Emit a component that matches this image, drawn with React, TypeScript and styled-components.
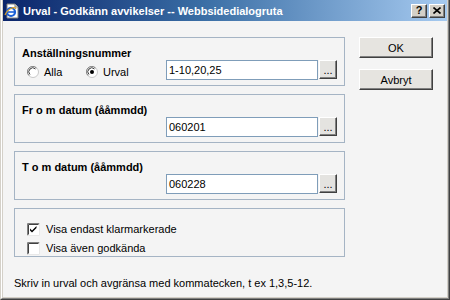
import React from "react";
import styled, { createGlobalStyle } from "styled-components";

const GlobalStyle = createGlobalStyle`
  html, body {
    margin: 0;
    padding: 0;
  }
  body {
    width: 450px;
    height: 300px;
    overflow: hidden;
    background: #d4d0c8;
    font-family: "Liberation Sans", Arial, sans-serif;
    font-size: 11px;
    color: #000;
  }
`;

const Frame = styled.div`
  width: 450px;
  height: 300px;
  box-sizing: border-box;
  background: #d4d0c8;
  border-right: 1px solid #404040;
  border-bottom: 1px solid #404040;
  border-left: 1px solid #d4d0c8;
`;

const FrameInner = styled.div`
  height: 100%;
  box-sizing: border-box;
  border-right: 1px solid #808080;
  border-bottom: 1px solid #808080;
  border-left: 1px solid #ffffff;
  padding: 0 1px 1px 1px;
  display: flex;
  flex-direction: column;
`;

const TitleBar = styled.div`
  height: 21px;
  flex-shrink: 0;
  display: flex;
  align-items: center;
  padding: 0 2px 0 1px;
  background: linear-gradient(to right, #0a246a 0%, #3a6ea5 45%, #a6caf0 100%);
`;

const TitleText = styled.div`
  flex: 1;
  margin-left: 3px;
  color: #fff;
  font-weight: bold;
  white-space: nowrap;
`;

const TitleButton = styled.div`
  width: 16px;
  height: 14px;
  box-sizing: border-box;
  margin-left: 2px;
  background: #d4d0c8;
  border-top: 1px solid #fff;
  border-left: 1px solid #fff;
  border-right: 1px solid #404040;
  border-bottom: 1px solid #404040;
  box-shadow: inset -1px -1px 0 #808080;
  display: flex;
  align-items: center;
  justify-content: center;
  font-weight: bold;
  font-size: 11px;
  line-height: 1;
  padding-bottom: 1px;
`;

const Body = styled.div`
  flex: 1;
  display: flex;
  flex-direction: column;
  background: #f4f4f4;
  padding: 16px 0 0 11px;
`;

const Main = styled.div`
  display: flex;
  align-items: flex-start;
`;

const LeftCol = styled.div`
  width: 331px;
  display: flex;
  flex-direction: column;
  gap: 8px;
`;

const RightCol = styled.div`
  margin-left: 14px;
  display: flex;
  flex-direction: column;
  gap: 11px;
`;

const Box = styled.div`
  height: 49px;
  box-sizing: border-box;
  border: 1px solid #a5b4c4;
  padding: 9px 7px 0 7px;
  display: flex;
  flex-direction: column;
`;

const CheckBox = styled(Box)`
  padding: 13px 12px 0 12px;
  gap: 5px;
`;

const BoxTitle = styled.div`
  font-weight: bold;
  line-height: 13px;
  height: 13px;
`;

const Row = styled.div`
  display: flex;
  align-items: center;
  height: 20px;
`;

const Radios = styled.div`
  flex: 1;
  display: flex;
  align-items: center;
  padding: 3px 0 0 5px;
`;

const RadioLabel = styled.label<{ $width: number }>`
  width: ${({ $width }) => $width}px;
  display: flex;
  align-items: center;
  gap: 5px;
`;

const Spacer = styled.div`
  flex: 1;
`;

const TextInput = styled.div`
  width: 152px;
  height: 20px;
  box-sizing: border-box;
  border: 1px solid #7f9db9;
  background: #fff;
  padding: 0 2px;
  line-height: 18px;
`;

const DotsButton = styled.div`
  width: 18px;
  height: 19px;
  box-sizing: border-box;
  margin-left: 1px;
  align-self: flex-start;
  background: #e4e3e0;
  border-top: 1px solid #fff;
  border-left: 1px solid #fff;
  border-right: 1px solid #404040;
  border-bottom: 1px solid #404040;
  box-shadow: inset -1px -1px 0 #808080;
  display: flex;
  justify-content: center;
  align-items: flex-end;
  line-height: 12px;
  padding-bottom: 2px;
`;

const Button = styled.div`
  width: 74px;
  height: 21px;
  box-sizing: border-box;
  background: #e6e4e0;
  border-top: 1px solid #fff;
  border-left: 1px solid #fff;
  border-right: 1px solid #404040;
  border-bottom: 1px solid #404040;
  box-shadow: inset -1px -1px 0 #808080;
  display: flex;
  align-items: center;
  justify-content: center;
`;

const CheckRow = styled.label`
  display: flex;
  align-items: center;
  gap: 6px;
  height: 14px;
`;

const Footnote = styled.div`
  margin-top: auto;
  margin-bottom: 8px;
`;

function Radio({ checked }: { checked: boolean }) {
  return (
    <svg width="12" height="12" viewBox="0 0 12 12">
      <circle cx="6" cy="6" r="5.5" fill="#fff" stroke="#c8c8c8" />
      <path d="M2 9.5 A5 5 0 0 1 9.5 2" fill="none" stroke="#808080" />
      <path d="M3 8.5 A3.8 3.8 0 0 1 8.5 3" fill="none" stroke="#404040" />
      {checked && <circle cx="6" cy="6" r="2" fill="#000" />}
    </svg>
  );
}

function Check({ checked }: { checked: boolean }) {
  return (
    <svg width="13" height="13" viewBox="0 0 13 13">
      <rect x="0" y="0" width="13" height="13" fill="#fff" />
      <path d="M0.5 12.5 V0.5 H12.5" fill="none" stroke="#808080" />
      <path d="M1.5 11.5 V1.5 H11.5" fill="none" stroke="#404040" />
      <path d="M12.5 0.5 V12.5 H0.5" fill="none" stroke="#e8e8e8" />
      {checked && (
        <path d="M3 5.5 L5 7.5 L9.5 3 V5 L5 9.5 L3 7.5 Z" fill="#000" />
      )}
    </svg>
  );
}

function IeIcon() {
  return (
    <svg width="16" height="16" viewBox="0 0 16 16">
      <path d="M3 1 H11 L14 4 V15 H3 Z" fill="#fff" stroke="#808080" />
      <path d="M11 1 V4 H14" fill="#e0e0e0" stroke="#808080" />
      <circle cx="7" cy="9" r="4" fill="none" stroke="#1c5fd6" strokeWidth="2.2" />
      <path d="M3.5 9 H10.5" stroke="#1c5fd6" strokeWidth="1.6" />
      <path d="M1 12 C4 5 11 3 12 6" fill="none" stroke="#e0a020" strokeWidth="1.2" />
    </svg>
  );
}

function CloseGlyph() {
  return (
    <svg width="8" height="7" viewBox="0 0 8 7">
      <path d="M0.5 0.5 L7.5 6.5 M7.5 0.5 L0.5 6.5" stroke="#000" strokeWidth="1.6" />
    </svg>
  );
}

export default function App() {
  return (
    <>
      <GlobalStyle />
      <Frame>
        <FrameInner>
          <TitleBar>
            <IeIcon />
            <TitleText>Urval - Godkänn avvikelser -- Webbsidedialogruta</TitleText>
            <TitleButton>?</TitleButton>
            <TitleButton>
              <CloseGlyph />
            </TitleButton>
          </TitleBar>
          <Body>
            <Main>
              <LeftCol>
                <Box>
                  <BoxTitle>Anställningsnummer</BoxTitle>
                  <Row>
                    <Radios>
                      <RadioLabel $width={59}>
                        <Radio checked={false} />
                        Alla
                      </RadioLabel>
                      <RadioLabel $width={60}>
                        <Radio checked={true} />
                        Urval
                      </RadioLabel>
                    </Radios>
                    <TextInput>1-10,20,25</TextInput>
                    <DotsButton>...</DotsButton>
                  </Row>
                </Box>
                <Box>
                  <BoxTitle>Fr o m datum (ååmmdd)</BoxTitle>
                  <Row>
                    <Spacer />
                    <TextInput>060201</TextInput>
                    <DotsButton>...</DotsButton>
                  </Row>
                </Box>
                <Box>
                  <BoxTitle>T o m datum (ååmmdd)</BoxTitle>
                  <Row>
                    <Spacer />
                    <TextInput>060228</TextInput>
                    <DotsButton>...</DotsButton>
                  </Row>
                </Box>
                <CheckBox>
                  <CheckRow>
                    <Check checked={true} />
                    Visa endast klarmarkerade
                  </CheckRow>
                  <CheckRow>
                    <Check checked={false} />
                    Visa även godkända
                  </CheckRow>
                </CheckBox>
              </LeftCol>
              <RightCol>
                <Button>OK</Button>
                <Button>Avbryt</Button>
              </RightCol>
            </Main>
            <Footnote>Skriv in urval och avgränsa med kommatecken, t ex 1,3,5-12.</Footnote>
          </Body>
        </FrameInner>
      </Frame>
    </>
  );
}
